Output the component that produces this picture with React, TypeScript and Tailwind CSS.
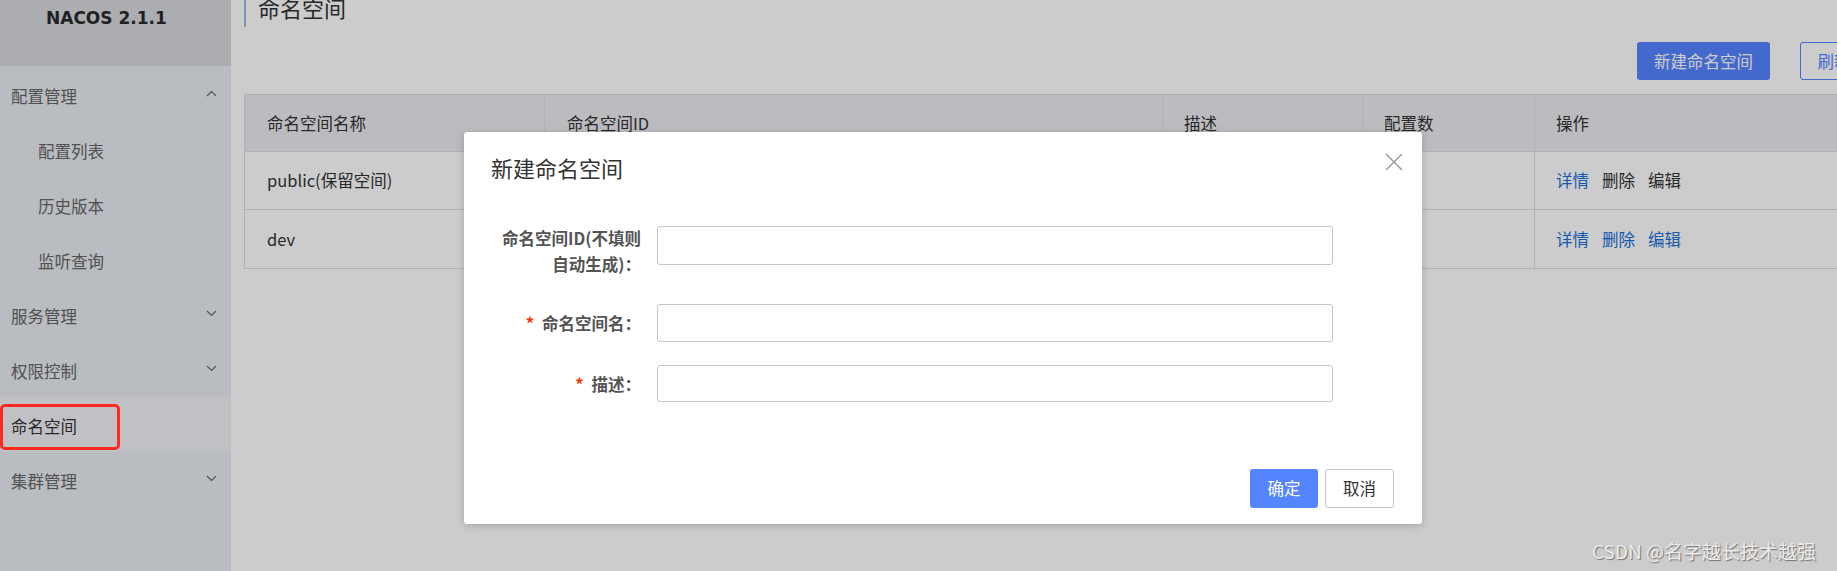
const menu = [
  { label: "配置管理", open: true, children: ["配置列表", "历史版本", "监听查询"] },
  { label: "服务管理" },
  { label: "权限控制" },
  { label: "命名空间", active: true, leaf: true },
  { label: "集群管理" },
];

const namespaces = [
  { name: "public(保留空间)", id: "", desc: "Public Namespace", count: "3", locked: true },
  { name: "dev", id: "dev", desc: "开发环境", count: "0", locked: false },
];

function Chevron({ up }: { up?: boolean }) {
  return (
    <svg width="11" height="7" viewBox="0 0 11 7" fill="none" stroke="#666" strokeWidth="1.2">
      {up ? <polyline points="1,6 5.5,1.5 10,6" /> : <polyline points="1,1 5.5,5.5 10,1" />}
    </svg>
  );
}

function Sidebar() {
  return (
    <aside className="w-[231px] shrink-0 h-full bg-[#e8ecf0] text-[#666]">
      <div className="h-[66px] bg-[#d6d9de] pl-[46px] pt-[6px]">
        <div className="font-['DejaVu_Sans',sans-serif] font-bold text-[17px] leading-[24px] text-[#2a2a2a]">
          NACOS 2.1.1
        </div>
      </div>
      {menu.map((m) => (
        <div key={m.label}>
          <div
            className={
              "h-[55px] flex items-center justify-between pl-[11px] pr-[14px] text-[16.5px] " +
              (m.active ? "bg-[#f2f2f7] text-[#333]" : "")
            }
          >
            <span className="pt-[5px]">{m.label}</span>
            {!m.leaf && <Chevron up={m.open} />}
          </div>
          {m.children?.map((c) => (
            <div key={c} className="h-[55px] flex items-center pl-[38px] text-[16.5px]">
              <span className="pt-[5px]">{c}</span>
            </div>
          ))}
        </div>
      ))}
    </aside>
  );
}

function NamespaceTable() {
  return (
    <div className="mt-[14px] border border-[#dcdee3] text-[16.5px] text-[#333]">
      <div className="flex h-[57px] items-center bg-[#ebecf0] border-b border-[#dcdee3]">
        <div className="w-[300px] h-full flex items-center pl-[22px] border-r border-[#dcdee3]">命名空间名称</div>
        <div className="w-[618px] h-full flex items-center pl-[22px] border-r border-[#dcdee3]">命名空间ID</div>
        <div className="w-[200px] h-full flex items-center pl-[21px] border-r border-[#dcdee3]">描述</div>
        <div className="w-[172px] h-full flex items-center pl-[21px] border-r border-[#dcdee3]">配置数</div>
        <div className="flex-1 h-full flex items-center pl-[21px]">操作</div>
      </div>
      {namespaces.map((n) => (
        <div key={n.name} className="flex h-[58px] items-center border-b border-[#dcdee3] last:border-b-0">
          <div className="w-[300px] h-full flex items-center pl-[22px] border-r border-[#dcdee3]">{n.name}</div>
          <div className="w-[618px] h-full flex items-center pl-[22px] border-r border-[#dcdee3]">{n.id}</div>
          <div className="w-[200px] h-full flex items-center pl-[21px] border-r border-[#dcdee3]">{n.desc}</div>
          <div className="w-[172px] h-full flex items-center pl-[21px] border-r border-[#dcdee3]">{n.count}</div>
          <div className="flex-1 h-full flex items-center pl-[21px] gap-[13px]">
            <span className="text-[#1c6fd8]">详情</span>
            <span className={n.locked ? "text-[#333]" : "text-[#1c6fd8]"}>删除</span>
            <span className={n.locked ? "text-[#333]" : "text-[#1c6fd8]"}>编辑</span>
          </div>
        </div>
      ))}
    </div>
  );
}

function Dialog() {
  return (
    <div className="absolute left-[464px] top-[132px] w-[958px] bg-white rounded-[3px] shadow-[0_2px_8px_rgba(0,0,0,0.18)]">
      <div className="pt-[20px] pl-[27px] text-[22px] leading-[30px] text-[#333]">新建命名空间</div>
      <button className="absolute right-[19px] top-[21px] w-[18px] h-[18px]">
        <svg width="18" height="18" viewBox="0 0 18 18" stroke="#999" strokeWidth="1.4">
          <line x1="1" y1="1" x2="17" y2="17" />
          <line x1="17" y1="1" x2="1" y2="17" />
        </svg>
      </button>

      <div className="mt-[44px] pl-[27px] text-[16.5px] font-bold text-[#555]">
        <div className="flex items-start">
          <div className="w-[150px] text-right leading-[26px] -mt-[1px]">
            <div>命名空间ID(不填则</div>
            <div>自动生成)：</div>
          </div>
          <input className="ml-[16px] w-[676px] h-[39px] border border-[#c4c6cf] rounded-[3px] outline-none" />
        </div>
        <div className="flex items-center mt-[27px]">
          <div className="w-[150px] text-right leading-[26px]">
            <span className="text-[#ff3000] mr-[8px]">*</span>命名空间名：
          </div>
          <input className="ml-[16px] w-[676px] h-[38px] border border-[#c4c6cf] rounded-[3px] outline-none" />
        </div>
        <div className="flex items-center mt-[23px]">
          <div className="w-[150px] text-right leading-[26px]">
            <span className="text-[#ff3000] mr-[8px]">*</span>描述：
          </div>
          <input className="ml-[16px] w-[676px] h-[37px] border border-[#c4c6cf] rounded-[3px] outline-none" />
        </div>
      </div>

      <div className="mt-[67px] pb-[16px] pr-[28px] flex justify-end gap-[7px] text-[16.5px]">
        <button className="w-[68px] h-[39px] rounded-[3px] bg-[#5584ff] text-white">确定</button>
        <button className="w-[69px] h-[39px] rounded-[3px] border border-[#c4c6cf] bg-white text-[#333]">取消</button>
      </div>
    </div>
  );
}

export default function App() {
  return (
    <div className="relative w-[1837px] h-[571px] overflow-hidden bg-white font-['Noto_Sans_CJK_SC',sans-serif]">
      <div className="flex h-full">
        <Sidebar />
        <main className="shrink-0 w-[1650px] pl-[13px]">
          <div className="w-[1624px]">
            <div className="-mt-[13px] h-[40px] border-l-2 border-[#9fb8e1] pl-[12px] text-[22px] leading-[40px] text-[#333]">
              命名空间
            </div>
            <div className="mt-[15px] flex justify-end text-[16.5px]">
              <button className="w-[133px] h-[38px] rounded-[3px] bg-[#5584ff] text-white">新建命名空间</button>
              <button className="ml-[30px] w-[68px] h-[38px] rounded-[3px] border border-[#5584ff] text-[#5584ff] bg-white">
                刷新
              </button>
            </div>
            <NamespaceTable />
          </div>
        </main>
      </div>

      {/* modal mask */}
      <div className="absolute inset-0 bg-black/20" />
      <Dialog />

      {/* screenshot annotation + watermark */}
      <div className="absolute left-0 top-[404px] w-[120px] h-[46px] border-[3px] border-[#ff2a1f] rounded-[5px]" />
      <div className="absolute left-[1592px] top-[538px] text-[19px] leading-[26px] text-[#ececec] [text-shadow:1px_1px_1px_rgba(0,0,0,0.45)]">
        CSDN @名字越长技术越强
      </div>
    </div>
  );
}
